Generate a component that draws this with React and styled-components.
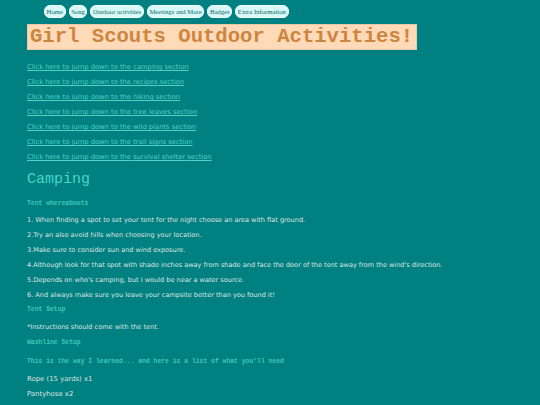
import React from "react";
import styled, { createGlobalStyle } from "styled-components";

const Global = createGlobalStyle`
  html, body { margin: 0; padding: 0; background: #008080; }
  body { font-family: "DejaVu Sans", Verdana, sans-serif; }
`;

const Page = styled.div`
  padding: 5px 0 0 27px;
`;

const Nav = styled.nav`
  display: flex;
  gap: 3px;
  margin-left: 17px;
  height: 13px;
  align-items: center;
`;

const Pill = styled.a`
  display: inline-block;
  font-family: "Liberation Serif", "Times New Roman", serif;
  font-size: 6.7px;
  line-height: 9px;
  padding: 1px 1.6px;
  color: #0b6b6b;
  background: #d8f8f8;
  border: 1px solid #f4ffff;
  border-radius: 6px;
  text-decoration: none;
  white-space: nowrap;
`;

const Title = styled.h1`
  display: inline-block;
  margin: 6px 0 0 0;
  padding: 0 3px 0 2px;
  height: 24px;
  line-height: 24px;
  font-family: "Liberation Mono", "Courier New", monospace;
  font-weight: bold;
  font-size: 20.6px;
  color: #cd853f;
  background: #ffdab9;
  border: 1px solid #e8c8a8;
`;

const Links = styled.div`
  display: flex;
  flex-direction: column;
  margin-top: 10px;
`;

const JumpLink = styled.a`
  font-size: 6.75px;
  line-height: 15px;
  color: #52d0c6;
  text-decoration: underline;
`;

const SectionTitle = styled.h2`
  margin: 5px 0 0 0;
  font-family: "Liberation Mono", "Courier New", monospace;
  font-weight: normal;
  font-size: 15px;
  line-height: 20px;
  color: #45d6c8;
`;

const SubTitle = styled.h4`
  margin: ${(p) => p.$top ?? 4}px 0 0 0;
  font-family: "Liberation Mono", "Courier New", monospace;
  font-weight: bold;
  font-size: 6.4px;
  line-height: 15px;
  color: #3fc8bb;
`;

const Text = styled.p`
  margin: ${(p) => p.$top ?? 0}px 0 0 0;
  font-size: ${(p) => p.$size ?? 6.55}px;
  line-height: 15px;
  color: #dde5e3;
`;

const MonoNote = styled.p`
  margin: 4px 0 0 0;
  font-family: "Liberation Mono", "Courier New", monospace;
  font-weight: bold;
  font-size: 6.4px;
  line-height: 15px;
  color: #3fc8bb;
`;

const navItems = ["Home", "Song", "Outdoor activities", "Meetings and More", "Badges", "Extra Information"];
const sections = ["camping", "recipes", "hiking", "tree leaves", "wild plants", "trail signs", "survival shelter"];
const steps = [
  "1. When finding a spot to set your tent for the night choose an area with flat ground.",
  "2.Try an also avoid hills when choosing your location.",
  "3.Make sure to consider sun and wind exposure.",
  "4.Although look for that spot with shade inches away from shade and face the door of the tent away from the wind's direction.",
  "5.Depends on who's camping, but I would be near a water source.",
  "6. And always make sure you leave your campsite better than you found it!",
];

export default function App() {
  return (
    <>
      <Global />
      <Page>
        <Nav>
          {navItems.map((n) => (
            <Pill key={n} href="#">{n}</Pill>
          ))}
        </Nav>
        <Title>Girl Scouts Outdoor Activities!</Title>
        <Links>
          {sections.map((s) => (
            <JumpLink key={s} href="#">Click here to jump down to the {s} section</JumpLink>
          ))}
        </Links>
        <SectionTitle>Camping</SectionTitle>
        <SubTitle $top={6}>Tent whereabouts</SubTitle>
        {steps.map((s, i) => (
          <Text key={i} $top={i === 0 ? 2 : 0}>{s}</Text>
        ))}
        <SubTitle $top={-1}>Tent Setup</SubTitle>
        <Text $top={3}>*Instructions should come with the tent.</Text>
        <SubTitle $top={0}>Washline Setup</SubTitle>
        <MonoNote>This is the way I learned... and here is a list of what you'll need</MonoNote>
        <Text $top={3} $size={6.9}>Rope (15 yards) x1</Text>
        <Text $size={6.9}>Pantyhose x2</Text>
      </Page>
    </>
  );
}
